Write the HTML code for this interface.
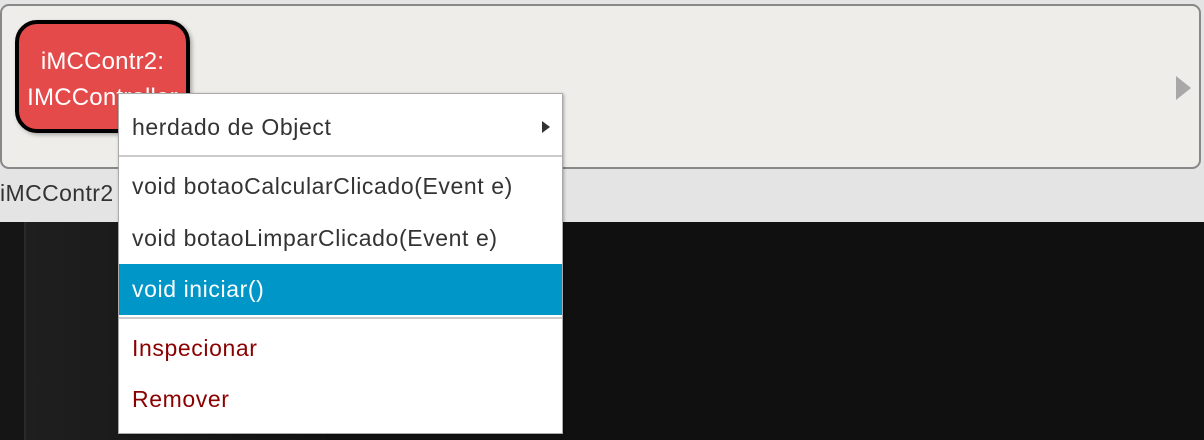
<!DOCTYPE html><html><head><style>
body{margin:0;width:1204px;height:440px;overflow:hidden;background:#e4e4e4;font-family:"Liberation Sans",sans-serif;position:relative}
.dark{position:absolute;left:0;top:222px;width:1204px;height:218px;background:#101010}
.dl{position:absolute;left:0;top:222px;width:24px;height:218px;background:#151515;border-right:2px solid #2a2a2a}
.dm{position:absolute;left:26px;top:222px;width:300px;height:218px;background:linear-gradient(90deg,#1f1f1f,#121212)}
.panel{position:absolute;left:0;top:4px;width:1197px;height:161px;border:2px solid #888;border-radius:9px;background:#eeede9}
.tri{position:absolute;left:1176px;top:76px;width:0;height:0;border-left:15px solid #a8a8a8;border-top:12px solid transparent;border-bottom:12px solid transparent}
.obj{position:absolute;left:15px;top:20px;width:167px;height:105px;border:4px solid #000;border-radius:22px;background:#e54a4a;color:#fff;font-size:24px;letter-spacing:0.2px;text-align:center;line-height:36px;box-shadow:2px 2px 4px rgba(0,0,0,.3);overflow:hidden;white-space:nowrap}
.lbl{position:absolute;left:0;top:180px;font-size:23px;letter-spacing:0.4px;color:#333}
.menu{position:absolute;left:118px;top:93px;width:443px;height:339px;background:#fff;border:1px solid #aaa;box-shadow:1px 1px 3px rgba(0,0,0,.3);font-size:23px;letter-spacing:0.6px;color:#333}
.it{position:absolute;left:0;width:443px;height:51px;line-height:51px;padding-left:13px;box-sizing:border-box;white-space:nowrap}
.sep{position:absolute;left:0;width:443px;height:2px;background:#ccc}
.arr{position:absolute;left:423px;border-left:8px solid #333;border-top:6px solid transparent;border-bottom:6px solid transparent}
</style></head><body>
<div class="dark"></div><div class="dm"></div><div class="dl"></div>
<div class="panel"></div><div class="tri"></div>
<div class="obj"><div style="margin-top:20px;margin-left:-20px;margin-right:-20px">iMCContr2:</div><div style="margin-left:-20px;margin-right:-20px">IMCController</div></div>
<div class="lbl">iMCContr2</div>
<div class="menu">
<div class="it" style="top:8px">herdado de Object</div>
<div class="arr" style="top:27px"></div>
<div class="sep" style="top:61px"></div>
<div class="it" style="top:67px">void botaoCalcularClicado(Event e)</div>
<div class="it" style="top:119px">void botaoLimparClicado(Event e)</div>
<div class="it" style="top:170px;background:#0096c8;color:#fff">void iniciar()</div>
<div class="sep" style="top:223px"></div>
<div class="it" style="top:229px;color:#8b0000">Inspecionar</div>
<div class="it" style="top:280px;color:#8b0000">Remover</div>
</div>
</body></html>
